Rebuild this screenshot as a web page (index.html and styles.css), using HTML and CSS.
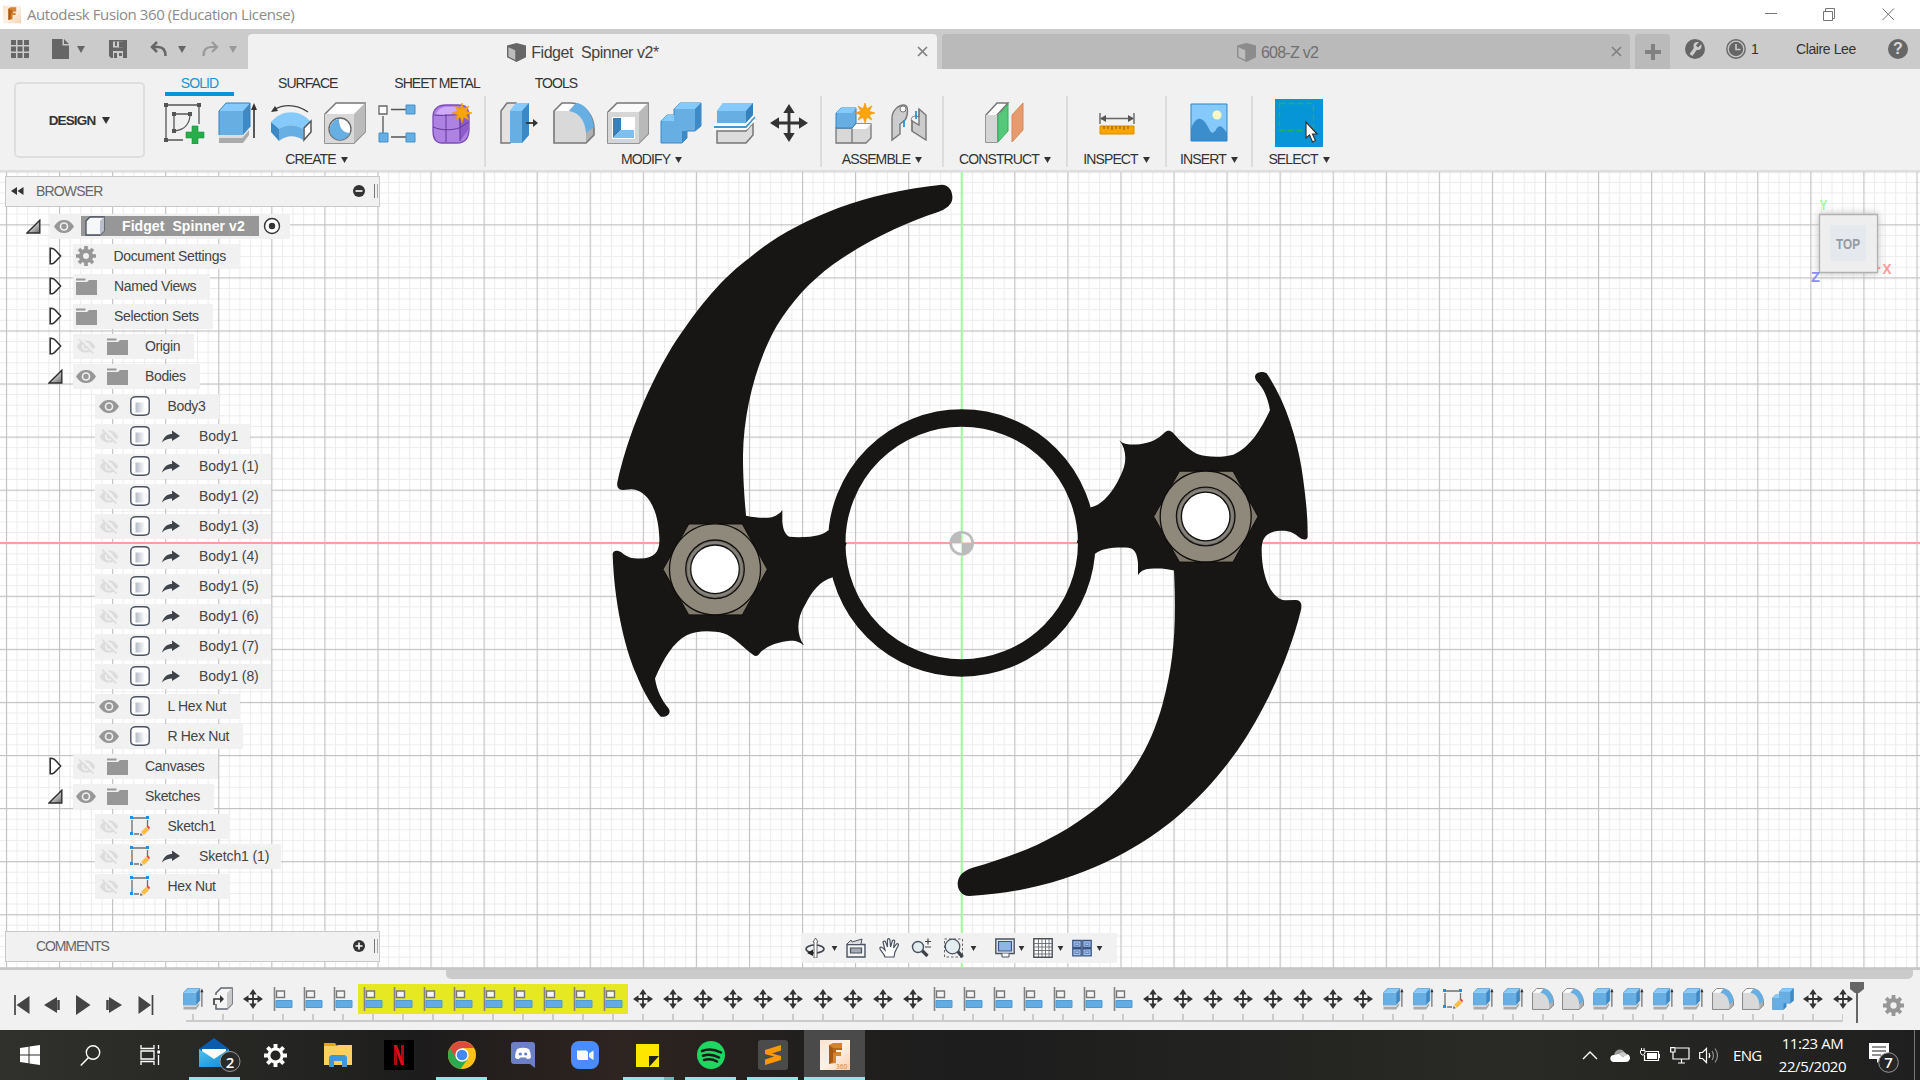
FILE: index.html
```html
<!DOCTYPE html>
<html lang="en">
<head>
<meta charset="utf-8">
<title>Autodesk Fusion 360 (Education License)</title>
<link rel="stylesheet" href="styles.css">
</head>
<body>
<svg class="defs" aria-hidden="true">
  <defs>
    <linearGradient id="g-tri" x1="0" y1="0" x2="1" y2="1"><stop offset="0.2" stop-color="#fff"/><stop offset="1" stop-color="#666"/></linearGradient>
    <linearGradient id="g-cyl" x1="0" x2="1"><stop offset="0" stop-color="#b4bac5"/><stop offset="1" stop-color="#fff"/></linearGradient>
    <linearGradient id="g-orange" x1="0" y1="0" x2="1" y2="1"><stop offset="0" stop-color="#fbe3cf"/><stop offset="0.5" stop-color="#fdf1e6"/><stop offset="1" stop-color="#f8cfae"/></linearGradient>
    <linearGradient id="g-mail" x1="0" y1="0" x2="1" y2="1"><stop offset="0" stop-color="#4cc2f0"/><stop offset="1" stop-color="#1387d6"/></linearGradient>
    <pattern id="p-minor" width="10.614" height="10.614" patternUnits="userSpaceOnUse" x="961.2" y="370.7"><path d="M.5 0V10.614M0 .5H10.614" stroke="#000" stroke-opacity=".075" fill="none"/></pattern>
    <pattern id="p-major" width="53.07" height="53.07" patternUnits="userSpaceOnUse" x="961.2" y="370.7"><path d="M.5 0V53.07M0 .5H53.07" stroke="#000" stroke-opacity=".18" stroke-width="1.3" fill="none"/></pattern>
  </defs>
  <symbol id="down" viewBox="0 0 8 7"><path d="M0 0H8L4 7Z" fill="currentColor"/></symbol>
  <symbol id="star" viewBox="0 0 20 20"><path d="M10 0l1.8 5.8L17 3l-2.8 5.2L20 10l-5.8 1.8L17 17l-5.200-2.800L10 20l-1.800-5.800L3 17l2.800-5.200L0 10l5.800-1.800L3 3l5.200 2.800Z" fill="#f9a602" stroke="#e59400" stroke-width=".6"/></symbol>
  <symbol id="eye" viewBox="0 0 20 14"><path d="M0 7C4 1 7 .5 10 .5S16 1 20 7C16 13 13 13.500 10 13.500S4 13 0 7Z" fill="#979797"/><circle cx="10" cy="7" r="4.300" fill="#f1f1f1"/><circle cx="10" cy="7" r="2.700" fill="#979797"/></symbol>
  <symbol id="eyeoff" viewBox="0 0 20 16"><path d="M0 8C4 2 7 1.500 10 1.500S16 2 20 8C16 14 13 14.500 10 14.500S4 14 0 8Z" fill="#dcdcdc"/><circle cx="10" cy="8" r="4.300" fill="#f1f1f1"/><circle cx="10" cy="8" r="2.600" fill="#dcdcdc"/><path d="M3.500 -.5L19.500 15.500" stroke="#f1f1f1" stroke-width="4"/><path d="M2.500 .5L18 15.500" stroke="#dcdcdc" stroke-width="1.700"/></symbol>
  <symbol id="folder" viewBox="0 0 21 17"><path d="M0 .5H9.500V2.500H0ZM0 4H11L13 2H21V17H0Z" fill="#979797"/></symbol>
  <symbol id="gear" viewBox="0 0 20 20"><path d="M10 0v20M0 10h20M3 3l14 14M17 3L3 17" stroke="currentColor" stroke-width="3.600"/><circle cx="10" cy="10" r="7.200" fill="currentColor"/><circle cx="10" cy="10" r="3" fill="#f1f1f1"/></symbol>
  <symbol id="closed" viewBox="0 0 13 18"><path d="M1.200 1.200C5 1 6 3 11.600 9C6 15 5 17 1.200 16.800Z" fill="#fff" stroke="#2f2f2f" stroke-width="1.600"/></symbol>
  <symbol id="open" viewBox="0 0 15 15"><path d="M1 14L13.800 1.200V14Z" fill="url(#g-tri)" stroke="#2f2f2f" stroke-width="1.400"/></symbol>
  <symbol id="cyl" viewBox="0 0 20 20"><path d="M.8 4.500C.8 2 3 .8 6 .8H14C17 .8 19.200 2 19.200 4.500V15.500C19.200 18 17 19.200 14 19.200H6C3 19.200 .8 18 .8 15.500Z" fill="#fff" stroke="#4b5361" stroke-width="1.400"/><path d="M5.500 6.500H15V16.500H5.500Z" fill="url(#g-cyl)"/></symbol>
  <symbol id="link" viewBox="0 0 18 13"><path d="M0 12.500C2 6 6 4 10 4V.5L18 6L10 11V8.500C6 8.500 3 9.500 0 12.500Z" fill="#3f434a"/></symbol>
  <symbol id="sketch" viewBox="0 0 20 20"><path d="M3 2H16.500M17.500 4V11M2 4V16M4 18H9" stroke="#6f6f6f" stroke-width="1.300" fill="none"/><path d="M0 0H3V3H0ZM16 0H19V3H16ZM0 16H3V19H0Z" fill="#1b90e8"/><path d="M11 16L16 11L19 14L14 19Z" fill="#fbbd43"/><path d="M16.500 10.500L18 9.500L20 11.500L19 13.500Z" fill="#f0403c"/><path d="M10.500 17L13 19.300L10 19.800Z" fill="#666"/></symbol>
  <symbol id="cubew" viewBox="0 0 20 20"><path d="M1 5L5 1H19V15L15 19H1Z" fill="#f6f7f9" stroke="#4b5361" stroke-width="1.300"/><path d="M15 5L19 1V15L15 19Z" fill="#b9bfca"/></symbol>
  <symbol id="cubetab" viewBox="0 0 20 20"><path d="M0 2.500L10 0L20 2.500V15L10 20L0 15Z" fill="currentColor"/><path d="M1.500 4.500L8.700 7.500V18L1.500 14.200Z" fill="#bcbcbc"/></symbol>
  <symbol id="move" viewBox="0 0 40 40"><path d="M20 5V35M5 20H35" stroke="#333" stroke-width="3"/><path d="M20 0L14 9.500H26ZM20 40L14 30.500H26ZM0 20L9.500 14V26ZM40 20L30.500 14V26Z" fill="#333"/></symbol>
  <symbol id="movesm" viewBox="0 0 20 20"><path d="M10 3V17M3 10H17" stroke="#333" stroke-width="1.800"/><path d="M10 0L6.300 5.500H13.700ZM10 20L6.300 14.500H13.700ZM0 10L5.500 6.300V13.700ZM20 10L14.500 6.300V13.700Z" fill="#333"/></symbol>
  <symbol id="extrude" viewBox="0 0 40 42"><path d="M1 35H25V41H1ZM25 35L31 28V33L25 41Z" fill="#aaa"/><path d="M1 31H25V36H1Z" fill="#ddd"/><path d="M1 9V33H25V9Z" fill="#67aee3"/><path d="M1 9L8 1H32L25 9Z" fill="#85cafb"/><path d="M25 9L32 1V25L25 33Z" fill="#3d8ac7"/><path d="M1 33V9L8 1H32V25" fill="none" stroke="#3280bd" stroke-width="1"/><path d="M36 36V5" stroke="#333" stroke-width="1.600"/><path d="M36 1L33 8H39Z" fill="#333"/></symbol>
  <symbol id="import" viewBox="0 0 20 24"><path d="M3 8V6L8 1H19V17L14 22H3V17" fill="#f5f5f5" stroke="#5f6670" stroke-width="1.600"/><path d="M14 6L19 1V17L14 22Z" fill="#c8c8c8"/><path d="M1 18V12H9" fill="none" stroke="#333" stroke-width="1.600"/><path d="M7 8L11 12L7 16Z" fill="#333"/></symbol>
  <symbol id="align" viewBox="0 0 20 24"><path d="M1.500 0V24" stroke="#848484" stroke-width="1.600"/><path d="M3.500 4H11.500V10.500H3.500Z" fill="#f5f5f5" stroke="#777" stroke-width="1.400"/><path d="M3 13.500H19V20.500H3Z" fill="#62ace3" stroke="#4d9ad4"/></symbol>
  <symbol id="fillet" viewBox="0 0 42 42"><path d="M1 41V9L9 1H18C31 1 41 14 41 27V33L33 41Z" fill="#d9d9d9"/><path d="M9 1H22L16 9H1Z" fill="#fff"/><path d="M33 28L41 25V33L33 41Z" fill="#b1b1b1"/><path d="M1 41V9L9 1H18C31 1 41 14 41 27V33L33 41Z" fill="none" stroke="#777" stroke-width="1.600"/><path d="M16 9L23 1C33 2 40 13 41 25L33 31C32 19 27 11 16 9Z" fill="#67aee3"/></symbol>
  <symbol id="combine" viewBox="0 0 42 42"><path d="M1 19L7 13H14V7L20 1H41V24L35 29H27V36L22 41H1Z" fill="#67aee3" stroke="#3b89c6"/><path d="M14 7L20 1H41L35 7ZM1 19L7 13H14V19Z" fill="#85cafb"/><path d="M35 7L41 1V24L35 29ZM22 29H27V36L22 41Z" fill="#3d8ac7"/></symbol>
  <symbol id="fusion" viewBox="0 0 30 30"><path d="M0 0H30V30H0Z" fill="url(#g-orange)"/><path d="M9 5L13 3H22V8H16V12H21V16H16V23L9 24Z" fill="#d9822b"/><path d="M9 5L13 8V22L9 24Z" fill="#a85a14"/><path d="M13 8H22V10H16V13H13Z" fill="#b9651a"/></symbol>
</svg>

<header class="titlebar">
  <svg class="app-icon" viewBox="0 0 30 30"><use href="#fusion"/></svg>
  <span class="app-title">Autodesk Fusion 360 (Education License)</span>
  <svg class="winbtns" viewBox="0 0 130 14"><path d="M0 6.500H12M58.500 4.500H67.500V13.500H58.500ZM60.500 4V1.500H69.500V11.500H68M117.500 1.500L129 13M129 1.500L117.500 13" fill="none" stroke="#777"/></svg>
</header>

<nav class="tabbar">
  <div class="quick">
    <svg class="q-grid" viewBox="0 0 18 18"><path d="M0 0H5V5H0ZM6.500 0H11.500V5H6.500ZM13 0H18V5H13ZM0 6.500H5V11.500H0ZM6.500 6.500H11.500V11.500H6.500ZM13 6.500H18V11.500H13ZM0 13H5V18H0ZM6.500 13H11.500V18H6.500ZM13 13H18V18H13Z" fill="#666"/></svg>
    <svg class="q-file" viewBox="0 0 17 20"><path d="M0 0H10.500V6.500H17V20H0ZM12 0L17 5H12Z" fill="#666"/></svg>
    <svg class="q-down" viewBox="0 0 8 7"><use href="#down"/></svg>
    <svg class="q-save" viewBox="0 0 18 18"><path d="M0 0H18V18H2L0 16Z" fill="#666"/><path d="M4 1.500H14V7.500H4ZM4 11H14V18H4Z" fill="#cbcbcb"/><path d="M6 1.500H8V6H6ZM10 1.500H14V7.500H10ZM5 13H8V18H5ZM10 13H13V16H10Z" fill="#666"/></svg>
    <svg class="q-undo" viewBox="0 0 17 16"><path d="M2 6H8C13 6 15.500 9 15.500 15M7 1L2 6L7 11" fill="none" stroke="#666" stroke-width="2.500"/></svg>
    <svg class="q-down u" viewBox="0 0 8 7"><use href="#down"/></svg>
    <svg class="q-redo" viewBox="0 0 17 16"><path d="M15 6H9C4 6 1.500 9 1.500 15M10 1L15 6L10 11" fill="none" stroke="#999" stroke-width="2.200"/></svg>
    <svg class="q-down r" viewBox="0 0 8 7"><use href="#down"/></svg>
  </div>
  <div class="doctab active"><svg class="cube" viewBox="0 0 20 20"><use href="#cubetab"/></svg><span class="t1">Fidget&nbsp; Spinner v2*</span><svg class="x" viewBox="0 0 11 11"><path d="M1 1L10 10M10 1L1 10" stroke="#808080" stroke-width="1.700"/></svg></div>
  <div class="doctab"><svg class="cube" viewBox="0 0 20 20"><use href="#cubetab"/></svg><span class="t2">608-Z v2</span><svg class="x" viewBox="0 0 11 11"><path d="M1 1L10 10M10 1L1 10" stroke="#808080" stroke-width="1.700"/></svg></div>
  <div class="newtab"><svg viewBox="0 0 16 16"><path d="M8 0V16M0 8H16" stroke="#808080" stroke-width="4"/></svg></div>
  <div class="account">
    <svg class="round" viewBox="0 0 20 20"><circle cx="10" cy="10" r="10" fill="#666"/><path d="M6 16L11 9" stroke="#ccc" stroke-width="3.500"/><circle cx="12.500" cy="7" r="4" fill="#ccc"/><path d="M12 7.500L16.500 2.500" stroke="#666" stroke-width="3"/></svg>
    <svg class="round clock" viewBox="0 0 20 20"><circle cx="10" cy="10" r="9.200" fill="none" stroke="#666" stroke-width="1.400"/><circle cx="10" cy="10" r="7.200" fill="#666"/><path d="M10 5V10.500H14.500" stroke="#ccc" stroke-width="1.600" fill="none"/></svg>
    <span class="one">1</span><span class="user">Claire Lee</span>
    <span class="help">?</span>
  </div>
</nav>

<section class="ribbon">
  <div class="workspace">DESIGN<svg viewBox="0 0 8 7"><use href="#down"/></svg></div>
  <div class="ribbon-main">
    <div class="ribbon-tabs"><span class="on solid">SOLID</span><span class="surface">SURFACE</span><span class="sheet">SHEET METAL</span><span class="tools-tab">TOOLS</span></div>
    <div class="groups">
      <div class="group create"><div class="tools">
        <svg viewBox="0 0 42 42"><path d="M3 3H36M3 3V38M36 3V22M3 38H20M11 12H27C27 21 22 28 11 29Z" fill="none" stroke="#555" stroke-width="1.300"/><path d="M1 1H5V5H1ZM34 1H38V5H34ZM1 36H5V40H1ZM9 10H13V14H9ZM25 10H29V14H25ZM9 27H13V31H9Z" fill="#555"/><path d="M29 24H35V30H41V36H35V42H29V36H23V30H29Z" fill="#28ac4c" stroke="#18953b" stroke-width=".6"/></svg>
        <svg viewBox="-1 0 42 42"><use href="#extrude"/></svg>
        <svg viewBox="0 0 42 42"><path d="M3 8C14 2 26 2 38 10" fill="none" stroke="#444" stroke-width="1.400"/><path d="M1 10L5 4L8 9Z" fill="#333"/><path d="M1 20C12 7 30 7 41 20L33 27C25 22 17 22 9 27Z" fill="#85cafb"/><path d="M1 20L9 27V39L1 30Z" fill="#3a88c4"/><path d="M9 27C17 22 25 22 33 27V38C25 33 17 33 9 39Z" fill="#67aee3"/><path d="M34 26L41 19V30L34 38Z" fill="#fff" stroke="#555" stroke-width="1.500"/></svg>
        <svg viewBox="0 0 42 42"><path d="M1 12L12 1H41V30L30 41H1Z" fill="#fff" stroke="#777" stroke-width="1.500"/><path d="M1 12H30V41H1Z" fill="#d8d8d8"/><path d="M30 12L41 1V30L30 41Z" fill="#bbb"/><circle cx="16" cy="27" r="11" fill="#fff" stroke="#666" stroke-width="1.300"/><path d="M15 17C15 27 20 31 26 31A10.500 10.500 0 1 1 15 17Z" fill="#67aee3"/></svg>
        <svg viewBox="0 0 42 42"><path d="M13 7.500H28M5 14V31M13 35H28" stroke="#555" stroke-width="1.300"/><path d="M1 4H9V12H1Z" fill="#fff" stroke="#666" stroke-width="1.300"/><path d="M28 3H37V12H28ZM1 31H10V40H1ZM28 31H37V40H28Z" fill="#67aee3" stroke="#4390cc"/></svg>
        <svg viewBox="0 0 42 42"><path d="M2 15C2 7 7 3 15 3H27C35 3 38 6 38 15V27C38 36 34 41 26 41H11C4 41 2 35 2 29Z" fill="#ad82e3" stroke="#7d4bb8" stroke-width="1.300"/><path d="M5 12C8 5 14 4 26 5L30 11L13 13Z" fill="#cfa9fa"/><path d="M28 14L37 10V28L29 39Z" fill="#8d5cca"/><path d="M15 12V40M2 25C11 29 22 28 28 26L38 20M29 12V39M3 13C10 14 20 13 37 12" fill="none" stroke="#66389e"/><use href="#star" x="21" y="1" width="20" height="20"/></svg>
      </div><div class="glabel">CREATE<svg viewBox="0 0 8 7"><use href="#down"/></svg></div></div>
      <div class="group modify"><div class="tools">
        <svg viewBox="0 0 42 42"><path d="M2 9L8 1H17V33L11 41H2Z" fill="#e2e2e2" stroke="#777" stroke-width="1.500"/><path d="M11 9L17 1H30V33L23 41H11Z" fill="#67aee3"/><path d="M11 9L17 1H30L23 9Z" fill="#85cafb"/><path d="M23 9L30 1V33L23 41Z" fill="#3a88c4"/><path d="M27 21H35" stroke="#333" stroke-width="1.800"/><path d="M39 21L34 17V25Z" fill="#333"/></svg>
        <svg viewBox="0 0 42 42"><use href="#fillet"/></svg>
        <svg viewBox="0 0 42 42"><path d="M1 10L10 1H41V32L32 41H1Z" fill="#fafafa" stroke="#777" stroke-width="1.600"/><path d="M1 10H32V41H1Z" fill="#d6d6d6"/><path d="M32 10L41 1V32L32 41Z" fill="#b9b9b9"/><path d="M5 15H28V37H5Z" fill="#fff"/><path d="M6 16H14V28L6 36Z" fill="#3482bd"/><path d="M14 28H27V36H6Z" fill="#7bc0f2"/></svg>
        <svg viewBox="0 0 42 42"><use href="#combine"/></svg>
        <svg viewBox="0 0 42 42"><path d="M3 9L9 1H39V13L32 21H3Z" fill="#67aee3"/><path d="M3 9L9 1H39L32 9Z" fill="#85cafb"/><path d="M32 9L39 1V13L32 21Z" fill="#3482bd"/><path d="M3 29H32L39 21V33L32 41H3Z" fill="#dcdcdc" stroke="#777" stroke-width="1.500"/><path d="M0 25H32L41 15" fill="none" stroke="#fff" stroke-width="5"/><path d="M0 25H32L41 15" fill="none" stroke="#3a9ce0" stroke-width="1.800"/></svg>
        <svg viewBox="-1 0 42 42"><use href="#move" x="1" y="2" width="38" height="38"/></svg>
      </div><div class="glabel">MODIFY<svg viewBox="0 0 8 7"><use href="#down"/></svg></div></div>
      <div class="group assemble"><div class="tools">
        <svg viewBox="0 0 42 42"><path d="M2 26H18V41H2ZM18 26L22 22H37V36L32 41H18Z" fill="#d8d8d8" stroke="#777" stroke-width="1.300"/><path d="M18 27L22 22H37L32 27Z" fill="#fff"/><path d="M2 11L7 6H22V21L18 26H2Z" fill="#67aee3" stroke="#3482bd"/><path d="M2 11L7 6H22L18 11Z" fill="#85cafb"/><use href="#star" x="21" y="1" width="20" height="20"/></svg>
        <svg viewBox="0 0 42 42"><path d="M4 16C4 9 10 3 16 3C21 3 20 14 17 18L12 22V32L4 38Z" fill="#ccc" stroke="#777" stroke-width="1.400"/><circle cx="15" cy="7" r="3" fill="#fff" stroke="#777"/><path d="M31 7L38 13V38L24 29V19L31 23Z" fill="#ccc" stroke="#777" stroke-width="1.400"/><path d="M24 20C22 17 24 12 31 15V7M24 29V18" fill="none" stroke="#777"/><path d="M16 18V25M28 9V17" stroke="#1990dc" stroke-width="1.700"/></svg>
      </div><div class="glabel">ASSEMBLE<svg viewBox="0 0 8 7"><use href="#down"/></svg></div></div>
      <div class="group construct"><div class="tools">
        <svg viewBox="0 0 42 42"><path d="M2 13L13 1H24L13 13V40H2Z" fill="#fff" stroke="#777" stroke-width="1.500"/><path d="M2 13H13V40H2Z" fill="#d5d5d5"/><path d="M14 14L24 2V29L14 40Z" fill="#55c879" stroke="#36ad5c"/><path d="M28 13L39 1V28L28 40Z" fill="#e69b6e" stroke="#d58858"/></svg>
      </div><div class="glabel">CONSTRUCT<svg viewBox="0 0 8 7"><use href="#down"/></svg></div></div>
      <div class="group inspect"><div class="tools">
        <svg viewBox="0 0 42 42"><path d="M4 11V22M38 11V22M5 16.500H37" stroke="#666" stroke-width="1.400"/><path d="M4 16.500L10 13V20ZM38 16.500L32 13V20Z" fill="#555"/><path d="M4 24H38V32H4Z" fill="#f9a602" stroke="#de8c00"/><path d="M8 24V27M12 24V27M16 24V28M20 24V27M24 24V27M28 24V28M32 24V27" stroke="#8a5800"/></svg>
      </div><div class="glabel">INSPECT<svg viewBox="0 0 8 7"><use href="#down"/></svg></div></div>
      <div class="group insert"><div class="tools">
        <svg viewBox="0 0 42 42"><path d="M3 2H39V39H3Z" fill="#85cafb"/><circle cx="29" cy="13" r="4.500" fill="#fdf8c8"/><path d="M3 27C8 13 15 14 21 27C24 33 26 31 29 26C33 22 35 26 39 31V39H3Z" fill="#3b8dcb"/><path d="M3 2H39V39H3Z" fill="none" stroke="#2c85c5"/></svg>
      </div><div class="glabel">INSERT<svg viewBox="0 0 8 7"><use href="#down"/></svg></div></div>
      <div class="group select"><div class="tools">
        <svg class="sel" viewBox="0 0 48 48"><path d="M0 0H48V48H0Z" fill="#0696d7"/><path d="M4.500 4.500H38.500V31.500H4.500Z" fill="none" stroke="#27ae60" stroke-width="1.300" stroke-dasharray="6 3"/><path d="M31 23V39L34.500 36L37.500 43L40.500 41.500L37.500 35H42Z" fill="#fff" stroke="#333" stroke-width="1.200"/></svg>
      </div><div class="glabel">SELECT<svg viewBox="0 0 8 7"><use href="#down"/></svg></div></div>
    </div>
  </div>
</section>

<main class="viewport">
  <svg class="canvas" viewBox="0 0 1920 796">
    <path d="M0 0H1920V796H0Z" fill="url(#p-minor)"/>
    <path d="M0 0H1920V796H0Z" fill="url(#p-major)"/>
    <path d="M0 371H1920" stroke="#ffa0a0" stroke-width="2"/>
    <path d="M961.700 0V796" stroke="#9aff9a" stroke-width="2"/>
    <g transform="translate(0 -172)">
      <circle cx="961.700" cy="543" r="125" fill="none" stroke="#171614" stroke-width="17.500"/>
      <g transform="translate(590 170) scale(.33333 .35714)" fill="#171614">
        <path d="M1055 41C1077 41 1089 60 1087 80C1086 97 1068 111 1040 119C956 145 842 190 730 264C660 312 605 368 560 437C500 535 461 670 459 800C459 870 464 920 468 968C500 974 525 975 545 972C560 968 570 962 577 952V985C579 1005 584 1020 598 1027C620 1029 640 1028 660 1027C685 1024 702 1020 715 1009L770 1045L728 1140C690 1150 665 1180 645 1218C620 1255 618 1300 642 1331C630 1323 620 1317 600 1318C560 1322 525 1333 505 1358C500 1362 495 1362 490 1358C465 1342 432 1306 400 1297C370 1290 320 1288 290 1303C250 1322 220 1370 195 1424C201 1458 215 1485 236 1508C245 1520 232 1533 213 1531C205 1526 165 1475 140 1415C100 1330 72 1200 68 1075C70 1063 85 1065 95 1071C112 1085 125 1088 150 1088C195 1086 210 1068 208 1030C205 950 173 897 125 894L98 896C83 895 79 885 83 870C108 767 160 630 245 497C330 375 400 300 480 245C600 150 800 65 1055 41Z"/>
      </g>
      <g transform="translate(940 360) scale(.33333 .35077)" fill="#171614">
        <path d="M980 38C1035 115 1070 220 1085 310C1095 375 1104 440 1103 505C1100 516 1085 512 1075 504C1060 490 1040 486 1020 487C975 490 966 510 965 540C965 620 995 682 1035 685L1068 684C1085 685 1087 700 1082 716C1060 800 1020 900 970 990C905 1110 820 1215 702 1310C560 1420 350 1515 88 1528C65 1528 53 1510 53 1493C53 1472 70 1455 100 1447C230 1411 350 1370 480 1270C570 1200 632 1105 668 980C702 860 710 760 702 600C680 594 650 593 630 595C612 596 602 602 594 613V580C592 555 585 537 565 535C520 533 482 538 466 552L410 520L452 420C490 414 530 365 552 305C560 280 556 250 538 229C550 240 565 243 600 240C630 237 655 226 674 207C681 200 690 200 698 207C720 230 745 257 772 268C800 278 850 278 880 270C930 248 962 200 990 143C983 105 970 80 950 60C940 47 945 33 970 34Z"/>
      </g>
      <g id="nut" transform="translate(715 569.300)">
        <path d="M-26.200 -45.300H27.300L52.300 0L27.300 45.600H-26.200L-52 0Z" fill="#807a6d" stroke="#0f0e0c"/>
        <circle r="45.500" fill="#8f897b" stroke="#0f0e0c" stroke-width="1.300"/>
        <circle r="29.300" fill="#77736a" stroke="#111" stroke-width="1.300"/>
        <circle r="26.500" fill="none" stroke="#8a8780" stroke-width="1.500"/>
        <circle r="24.300" fill="#fff" stroke="#111" stroke-width="1.300"/>
      </g>
      <use href="#nut" x="490.700" y="-52.800"/>
      <g transform="translate(961.700 543.200)"><circle r="11" fill="#fff" fill-opacity=".75" stroke="#bbb" stroke-width="2.600"/><path d="M0 0V-11A11 11 0 0 0 -11 0ZM0 0V11A11 11 0 0 0 11 0Z" fill="#bbb"/><path d="M0 -10V0" stroke="#96ff96" stroke-width="1.500"/><path d="M0 0H10" stroke="#ff9c9c"/></g>
      <g class="viewcube">
        <path d="M1819.500 214.500H1877.500V272.500H1819.500Z" fill="#f1f1f1" fill-opacity=".94" stroke="#b0b0b0" stroke-width="1.300"/>
        <path d="M1830 225H1866V261H1830Z" fill="#e5e8ec"/>
        <text x="1836" y="248.500" class="vc-top" textLength="24" lengthAdjust="spacingAndGlyphs">TOP</text>
        <text x="1819.500" y="209.500" class="ax y" textLength="8" lengthAdjust="spacingAndGlyphs">Y</text>
        <text x="1882.500" y="273.500" class="ax xx" textLength="9" lengthAdjust="spacingAndGlyphs">X</text>
        <text x="1811" y="281.500" class="ax z" textLength="9" lengthAdjust="spacingAndGlyphs">Z</text>
        <circle cx="1879" cy="268" r="1.300" fill="#fd8f8f"/>
      </g>
    </g>
  </svg>

  <aside class="browser">
    <div class="panel"><svg class="rew" viewBox="0 0 13 8"><path d="M6 0V8L0 4ZM12.500 0V8L6.500 4Z" fill="#333"/></svg><span class="p-name b">BROWSER</span><svg class="pm" viewBox="0 0 12 12"><circle cx="6" cy="6" r="6" fill="#333"/><path d="M2.500 6H9.500" stroke="#fff" stroke-width="1.600"/></svg><i class="grip"></i></div>
    <div class="tree">
      <div class="row l0"><svg class="op" viewBox="0 0 15 15"><use href="#open"/></svg><div class="pill root"><svg class="eye" viewBox="0 0 20 14"><use href="#eye"/></svg><span class="rootname"><svg class="ic" viewBox="0 0 20 20"><use href="#cubew"/></svg><b>Fidget&nbsp; Spinner v2</b></span><svg class="radio" viewBox="0 0 18 18"><circle cx="9" cy="9" r="7.500" fill="#fff" stroke="#333" stroke-width="1.400"/><circle cx="9" cy="9" r="3.200" fill="#333"/></svg></div></div>
      <div class="row l1"><svg class="cl" viewBox="0 0 13 18"><use href="#closed"/></svg><div class="pill"><svg class="ic gear" viewBox="0 0 20 20"><use href="#gear"/></svg><span>Document Settings</span></div></div>
      <div class="row l1"><svg class="cl" viewBox="0 0 13 18"><use href="#closed"/></svg><div class="pill"><svg class="fo" viewBox="0 0 21 17"><use href="#folder"/></svg><span>Named Views</span></div></div>
      <div class="row l1"><svg class="cl" viewBox="0 0 13 18"><use href="#closed"/></svg><div class="pill"><svg class="fo" viewBox="0 0 21 17"><use href="#folder"/></svg><span>Selection Sets</span></div></div>
      <div class="row l1"><svg class="cl" viewBox="0 0 13 18"><use href="#closed"/></svg><div class="pill"><svg class="eye" viewBox="0 0 20 16"><use href="#eyeoff"/></svg><svg class="fo" viewBox="0 0 21 17"><use href="#folder"/></svg><span>Origin</span></div></div>
      <div class="row l1"><svg class="op" viewBox="0 0 15 15"><use href="#open"/></svg><div class="pill"><svg class="eye" viewBox="0 0 20 14"><use href="#eye"/></svg><svg class="fo" viewBox="0 0 21 17"><use href="#folder"/></svg><span>Bodies</span></div></div>
      <div class="row l2"><div class="pill"><svg class="eye" viewBox="0 0 20 14"><use href="#eye"/></svg><svg class="ic" viewBox="0 0 20 20"><use href="#cyl"/></svg><span>Body3</span></div></div>
      <div class="row l2"><div class="pill"><svg class="eye" viewBox="0 0 20 16"><use href="#eyeoff"/></svg><svg class="ic" viewBox="0 0 20 20"><use href="#cyl"/></svg><svg class="ln" viewBox="0 0 18 13"><use href="#link"/></svg><span>Body1</span></div></div>
      <div class="row l2"><div class="pill"><svg class="eye" viewBox="0 0 20 16"><use href="#eyeoff"/></svg><svg class="ic" viewBox="0 0 20 20"><use href="#cyl"/></svg><svg class="ln" viewBox="0 0 18 13"><use href="#link"/></svg><span>Body1 (1)</span></div></div>
      <div class="row l2"><div class="pill"><svg class="eye" viewBox="0 0 20 16"><use href="#eyeoff"/></svg><svg class="ic" viewBox="0 0 20 20"><use href="#cyl"/></svg><svg class="ln" viewBox="0 0 18 13"><use href="#link"/></svg><span>Body1 (2)</span></div></div>
      <div class="row l2"><div class="pill"><svg class="eye" viewBox="0 0 20 16"><use href="#eyeoff"/></svg><svg class="ic" viewBox="0 0 20 20"><use href="#cyl"/></svg><svg class="ln" viewBox="0 0 18 13"><use href="#link"/></svg><span>Body1 (3)</span></div></div>
      <div class="row l2"><div class="pill"><svg class="eye" viewBox="0 0 20 16"><use href="#eyeoff"/></svg><svg class="ic" viewBox="0 0 20 20"><use href="#cyl"/></svg><svg class="ln" viewBox="0 0 18 13"><use href="#link"/></svg><span>Body1 (4)</span></div></div>
      <div class="row l2"><div class="pill"><svg class="eye" viewBox="0 0 20 16"><use href="#eyeoff"/></svg><svg class="ic" viewBox="0 0 20 20"><use href="#cyl"/></svg><svg class="ln" viewBox="0 0 18 13"><use href="#link"/></svg><span>Body1 (5)</span></div></div>
      <div class="row l2"><div class="pill"><svg class="eye" viewBox="0 0 20 16"><use href="#eyeoff"/></svg><svg class="ic" viewBox="0 0 20 20"><use href="#cyl"/></svg><svg class="ln" viewBox="0 0 18 13"><use href="#link"/></svg><span>Body1 (6)</span></div></div>
      <div class="row l2"><div class="pill"><svg class="eye" viewBox="0 0 20 16"><use href="#eyeoff"/></svg><svg class="ic" viewBox="0 0 20 20"><use href="#cyl"/></svg><svg class="ln" viewBox="0 0 18 13"><use href="#link"/></svg><span>Body1 (7)</span></div></div>
      <div class="row l2"><div class="pill"><svg class="eye" viewBox="0 0 20 16"><use href="#eyeoff"/></svg><svg class="ic" viewBox="0 0 20 20"><use href="#cyl"/></svg><svg class="ln" viewBox="0 0 18 13"><use href="#link"/></svg><span>Body1 (8)</span></div></div>
      <div class="row l2"><div class="pill"><svg class="eye" viewBox="0 0 20 14"><use href="#eye"/></svg><svg class="ic" viewBox="0 0 20 20"><use href="#cyl"/></svg><span>L Hex Nut</span></div></div>
      <div class="row l2"><div class="pill"><svg class="eye" viewBox="0 0 20 14"><use href="#eye"/></svg><svg class="ic" viewBox="0 0 20 20"><use href="#cyl"/></svg><span>R Hex Nut</span></div></div>
      <div class="row l1"><svg class="cl" viewBox="0 0 13 18"><use href="#closed"/></svg><div class="pill"><svg class="eye" viewBox="0 0 20 16"><use href="#eyeoff"/></svg><svg class="fo" viewBox="0 0 21 17"><use href="#folder"/></svg><span>Canvases</span></div></div>
      <div class="row l1"><svg class="op" viewBox="0 0 15 15"><use href="#open"/></svg><div class="pill"><svg class="eye" viewBox="0 0 20 14"><use href="#eye"/></svg><svg class="fo" viewBox="0 0 21 17"><use href="#folder"/></svg><span>Sketches</span></div></div>
      <div class="row l2"><div class="pill"><svg class="eye" viewBox="0 0 20 16"><use href="#eyeoff"/></svg><svg class="ic" viewBox="0 0 20 20"><use href="#sketch"/></svg><span>Sketch1</span></div></div>
      <div class="row l2"><div class="pill"><svg class="eye" viewBox="0 0 20 16"><use href="#eyeoff"/></svg><svg class="ic" viewBox="0 0 20 20"><use href="#sketch"/></svg><svg class="ln" viewBox="0 0 18 13"><use href="#link"/></svg><span>Sketch1 (1)</span></div></div>
      <div class="row l2"><div class="pill"><svg class="eye" viewBox="0 0 20 16"><use href="#eyeoff"/></svg><svg class="ic" viewBox="0 0 20 20"><use href="#sketch"/></svg><span>Hex Nut</span></div></div>
    </div>
    <div class="panel comments"><span class="p-name c">COMMENTS</span><svg class="pm" viewBox="0 0 12 12"><circle cx="6" cy="6" r="6" fill="#333"/><path d="M2.500 6H9.500M6 2.500V9.500" stroke="#fff" stroke-width="1.600"/></svg><i class="grip"></i></div>
  </aside>

  <div class="navbar">
    <svg class="nv a" viewBox="0 0 20 20"><ellipse cx="10" cy="11" rx="9" ry="4" fill="none" stroke="#3d434d" stroke-width="1.700"/><path d="M9 20V4H8L10.500 0L13 4H12V20Z" fill="#fff" stroke="#555" stroke-width=".9"/><path d="M2 15L8 11.500V18Z" fill="#222"/></svg><svg class="nd a2" viewBox="0 0 8 6"><use href="#down" width="8" height="6"/></svg>
    <svg class="nv b2" viewBox="0 0 20 20"><path d="M1 6.500H19V19H1Z" fill="#f4f4f4" stroke="#4b5361" stroke-width="1.400"/><path d="M4.500 10H15.500V15H4.500Z" fill="#a6abb5" stroke="#4b5361" stroke-width="1.200"/><path d="M1 6L5 2L6 4L16 1L15 6" fill="#ddd" stroke="#4b5361"/></svg>
    <svg class="nv c2" viewBox="0 0 20 20"><path d="M6 19C5 15 1 13 .8 10C2 8 4 10 6 12L4 4C5 2.500 6.500 3 7 5L8.500 9L8.500 1.500C9.500 0 11 1 11 2.500L11.500 9L13.500 2.500C15 1.500 16 2.500 15.500 4L14.500 10L17.500 6C19 5 20 6.500 19 8L16 14L15 19Z" fill="#fff" stroke="#4b5361" stroke-width="1.200"/></svg>
    <svg class="nv d" viewBox="0 0 20 20"><path d="M10 12L16 18" stroke="#3c4048" stroke-width="3.200"/><circle cx="6.500" cy="9" r="5.500" fill="#e1edef" stroke="#4b5361" stroke-width="1.400"/><path d="M13.500 3.500H19.500M16.500 .5V6.500M13.500 9H19.500" stroke="#444" stroke-width="1.200"/></svg>
    <svg class="nv e" viewBox="0 0 20 20"><path d="M1 1H19V19H1Z" fill="none" stroke="#666" stroke-dasharray="2.500 2"/><path d="M14 13L19 19" stroke="#3c4048" stroke-width="3.400"/><circle cx="9" cy="8.500" r="7.300" fill="#e1edef" stroke="#4b5361" stroke-width="1.300"/></svg><svg class="nd e2" viewBox="0 0 8 6"><use href="#down" width="8" height="6"/></svg>
    <svg class="nv f" viewBox="0 0 20 20"><path d="M.8 1H19.200V15.500H.8Z" fill="#e8e8e8" stroke="#4b5361" stroke-width="1.400"/><path d="M3.500 3.500H16.500V13H3.500Z" fill="#8fb5e5" stroke="#34588c" stroke-width="1.200"/><path d="M7 15.500V19H14V15.500" fill="#fff" stroke="#4b5361"/></svg><svg class="nd f2" viewBox="0 0 8 6"><use href="#down" width="8" height="6"/></svg>
    <svg class="nv g" viewBox="0 0 20 20"><path d="M.8 .8H19.200V19.200H.8Z" fill="#fff" stroke="#4b4f58" stroke-width="1.400"/><path d="M5.500 1V19M9 1V19M12.500 1V19M16 1V19M1 5.500H19M1 9H19M1 12.500H19M1 16H19" stroke="#666b75" stroke-width=".9"/></svg><svg class="nd g2" viewBox="0 0 8 6"><use href="#down" width="8" height="6"/></svg>
    <svg class="nv h" viewBox="0 0 20 20"><path d="M.8 2.500H9.200V9.500H.8ZM10.800 2.500H19.200V9.500H10.800ZM.8 10.800H9.200V17.800H.8ZM10.800 10.800H19.200V17.800H10.800Z" fill="#a8c1e6" stroke="#3a5584" stroke-width="1.300"/><path d="M3 5H7V7.500H3ZM13 5H17V7.500H13ZM3 13H7V15.500H3ZM13 13H17V15.500H13Z" fill="none" stroke="#5a86c5"/></svg><svg class="nd h2" viewBox="0 0 8 6"><use href="#down" width="8" height="6"/></svg>
  </div>
</main>

<section class="timeline">
  <div class="scroll"><i></i></div>
  <div class="tl-body">
    <svg class="play" viewBox="0 0 140 20"><path d="M1 0V20M138.500 0V20" stroke="#444" stroke-width="1.700"/><path d="M15.500 1V19L2.500 10ZM43 2V18L30 10ZM62 0L76.500 10L62 20ZM95 2V18L108 10ZM124.500 1V19L137 10Z" fill="#444"/><path d="M44.500 5V15M93.500 5V15" stroke="#444" stroke-width="2.500"/></svg>
    <div class="track">
      <div class="features">
        <svg class="ex"><use href="#extrude"/></svg><svg class="al"><use href="#import"/></svg><svg class="mv"><use href="#movesm"/></svg>
        <svg class="al"><use href="#align"/></svg><svg class="al"><use href="#align"/></svg><svg class="al"><use href="#align"/></svg>
        <svg class="al hi"><use href="#align"/></svg><svg class="al hi"><use href="#align"/></svg><svg class="al hi"><use href="#align"/></svg><svg class="al hi"><use href="#align"/></svg><svg class="al hi"><use href="#align"/></svg><svg class="al hi"><use href="#align"/></svg><svg class="al hi"><use href="#align"/></svg><svg class="al hi"><use href="#align"/></svg><svg class="al hi"><use href="#align"/></svg>
        <svg class="mv"><use href="#movesm"/></svg><svg class="mv"><use href="#movesm"/></svg><svg class="mv"><use href="#movesm"/></svg><svg class="mv"><use href="#movesm"/></svg><svg class="mv"><use href="#movesm"/></svg><svg class="mv"><use href="#movesm"/></svg><svg class="mv"><use href="#movesm"/></svg><svg class="mv"><use href="#movesm"/></svg><svg class="mv"><use href="#movesm"/></svg><svg class="mv"><use href="#movesm"/></svg>
        <svg class="al"><use href="#align"/></svg><svg class="al"><use href="#align"/></svg><svg class="al"><use href="#align"/></svg><svg class="al"><use href="#align"/></svg><svg class="al"><use href="#align"/></svg><svg class="al"><use href="#align"/></svg><svg class="al"><use href="#align"/></svg>
        <svg class="mv"><use href="#movesm"/></svg><svg class="mv"><use href="#movesm"/></svg><svg class="mv"><use href="#movesm"/></svg><svg class="mv"><use href="#movesm"/></svg><svg class="mv"><use href="#movesm"/></svg><svg class="mv"><use href="#movesm"/></svg><svg class="mv"><use href="#movesm"/></svg><svg class="mv"><use href="#movesm"/></svg>
        <svg class="ex"><use href="#extrude"/></svg><svg class="ex"><use href="#extrude"/></svg><svg class="al"><use href="#sketch"/></svg><svg class="ex"><use href="#extrude"/></svg><svg class="ex"><use href="#extrude"/></svg>
        <svg class="fl"><use href="#fillet"/></svg><svg class="fl"><use href="#fillet"/></svg>
        <svg class="ex"><use href="#extrude"/></svg><svg class="ex"><use href="#extrude"/></svg><svg class="ex"><use href="#extrude"/></svg><svg class="ex"><use href="#extrude"/></svg>
        <svg class="fl"><use href="#fillet"/></svg><svg class="fl"><use href="#fillet"/></svg><svg class="fl"><use href="#combine"/></svg><svg class="mv"><use href="#movesm"/></svg><svg class="mv"><use href="#movesm"/></svg>
      </div>
      <div class="rail"></div>
    </div>
    <svg class="marker" viewBox="0 0 14 41"><path d="M0 0H14V7L9 11H5L0 7Z" fill="#666"/><path d="M7 8V41" stroke="#666" stroke-width="2"/></svg>
    <svg class="tl-gear" viewBox="0 0 20 20"><use href="#gear"/></svg>
  </div>
</section>

<footer class="taskbar">
  <div class="apps">
    <div class="app w60"><svg width="20" height="20" viewBox="0 0 20 20"><path d="M0 3L8.500 1.700V9.500H0ZM9.500 1.500L20 0V9.500H9.500ZM0 10.500H8.500V18.300L0 17ZM9.500 10.500H20V20L9.500 18.500Z" fill="#fff"/></svg></div>
    <div class="app w60"><svg width="21" height="21" viewBox="0 0 21 21"><circle cx="13" cy="7.500" r="6.700" fill="none" stroke="#fff" stroke-width="1.400"/><path d="M8.500 12.500L.8 20.500" stroke="#fff" stroke-width="1.500"/></svg></div>
    <div class="app w60"><svg width="20" height="20" viewBox="0 0 20 20"><path d="M1 0V3.500H14V0M1 20V16.500H14V20M1 6H14V14H1ZM18.500 0V4M18.500 10V20" fill="none" stroke="#fff" stroke-width="1.300"/><path d="M17.300 5.500H20V8.500H17.300Z" fill="#fff"/></svg></div>
    <div class="app mail on"><svg width="42" height="36" viewBox="0 0 42 36"><path d="M0 12L15 1L30 12V30H0Z" fill="#0b5cad"/><path d="M3 12H27V22H3Z" fill="#fff"/><path d="M0 12L15 22L30 12V30H0Z" fill="url(#g-mail)"/><circle cx="31" cy="24.500" r="10" fill="#2a2a2a" stroke="#999"/><text x="26.700" y="30.500" class="bd">2</text></svg></div>
    <div class="app set"><svg width="23" height="23" viewBox="0 0 20 20"><path d="M10 0V4M10 16V20M0 10H4M16 10H20M3 3L6 6M14 14L17 17M17 3L14 6M6 14L3 17" stroke="#fff" stroke-width="3.400"/><circle cx="10" cy="10" r="5.700" fill="none" stroke="#fff" stroke-width="2.600"/></svg></div>
    <div class="app exp"><svg width="28" height="24" viewBox="0 0 28 24"><path d="M0 0H11L13 3H0Z" fill="#e8a317"/><path d="M0 3H12L14 2H28V22H0Z" fill="#fbd05f"/><path d="M5 24V14L7 12H21L23 14V24H18V18H10V24Z" fill="#3c97dd"/></svg></div>
    <div class="app net"><svg width="30" height="30" viewBox="0 0 30 30"><path d="M0 0H30V30H0Z" fill="#000"/><path d="M10 5H13V25H10ZM17 5H20V25H17Z" fill="#b20710"/><path d="M10 5H13L20 25H17Z" fill="#e50914"/></svg></div>
    <div class="app chr on"><svg width="28" height="28" viewBox="0 0 28 28"><circle cx="14" cy="14" r="14" fill="#fbc116"/><path d="M14 14L1.900 7A14 14 0 0 0 12.500 27.900L20 17.500Z" fill="#2da94f"/><path d="M14 14L7.900 17.500L1.900 7A14 14 0 0 1 26.100 7H14Z" fill="#dd4b3e"/><circle cx="14" cy="14" r="6.700" fill="#fff"/><circle cx="14" cy="14" r="5.300" fill="#4587f3"/></svg></div>
    <div class="app dis"><svg width="24" height="26" viewBox="0 0 24 26"><path d="M3 0H21Q24 0 24 3V26L19 22H3Q0 22 0 19V3Q0 0 3 0Z" fill="#6c7fc9"/><path d="M6 7Q12 4.500 18 7Q20 11 20 15.500Q18 17.500 16 17L15 15.500H9L8 17Q6 17.500 4 15.500Q4 11 6 7Z" fill="#fff"/><circle cx="9.300" cy="12" r="1.600" fill="#6c7fc9"/><circle cx="14.700" cy="12" r="1.600" fill="#6c7fc9"/></svg></div>
    <div class="app zoom"><svg width="28" height="28" viewBox="0 0 28 28"><rect width="28" height="28" rx="8" fill="#4a8cff"/><path d="M6 9.500H15Q17 9.500 17 12V19H8Q6 19 6 17ZM18 12.500L22.500 9.500V19L18 16Z" fill="#fff"/></svg></div>
    <div class="app note on"><svg width="23" height="23" viewBox="0 0 23 23"><path d="M0 0H23V23H0Z" fill="#ffe600"/><path d="M13 12H23L13 23Z" fill="#1f1f1f"/></svg></div>
    <div class="app spo on"><svg width="28" height="28" viewBox="0 0 28 28"><circle cx="14" cy="14" r="14" fill="#1ed760"/><path d="M5 10Q14 6.500 24 11.500M6 14.700Q14 12 22 16.500M7 19Q14 17 20 20.500" fill="none" stroke="#1a1a1a" stroke-width="2.500" stroke-linecap="round"/></svg></div>
    <div class="app sub on"><svg width="30" height="30" viewBox="0 0 30 30"><rect width="30" height="30" rx="3" fill="#4b4b4b"/><path d="M7 10L23 5V10.500L14 13.500L23 16V20L7 25V19.500L16 16.500L7 14Z" fill="#ff9800"/></svg></div>
    <div class="app fus on"><svg width="30" height="30" viewBox="0 0 30 30"><use href="#fusion"/><text x="16" y="28.500" class="f360">360</text></svg></div>
  </div>
  <div class="tray">
    <svg class="t-up" viewBox="0 0 16 9"><path d="M1 8L8 1L15 8" fill="none" stroke="#fff" stroke-width="1.400"/></svg>
    <svg class="t-cloud" viewBox="0 0 20 13"><path d="M4 6C5 0 12 -2 15 4L8 9Z" fill="#999"/><path d="M4 13C-1 13 -1 6 4 6L9 5L13 8C17 3 20 6 20 9.500Q19 13 16 13Z" fill="#fff"/><path d="M9 5C12 2 16 3 17 6L13 8Z" fill="#ccc"/></svg>
    <svg class="t-bat" viewBox="0 0 20 14"><path d="M5.500 3.500H18.500V12.500H4.500V7M19.500 6V10" fill="none" stroke="#fff" stroke-width="1.200"/><path d="M7 5H17V11H7Z" fill="#fff"/><path d="M.5 2.500H5V5L3.500 7H2L.5 5ZM1.500 0V2M4 0V2" fill="none" stroke="#fff"/></svg>
    <svg class="t-net" viewBox="0 0 20 17"><path d="M6 1H19V12H3V7M8 16H15M11.500 12V16M.7 .7H5V5H.7ZM3 5V8" fill="none" stroke="#fff" stroke-width="1.200"/></svg>
    <svg class="t-snd" viewBox="0 0 20 17"><path d="M.7 5.500H3.500L7.500 1.500V15.500L3.500 11.500H.7Z" fill="none" stroke="#fff" stroke-width="1.200"/><path d="M10 6Q11.500 8.500 10 11" fill="none" stroke="#fff" stroke-width="1.200"/><path d="M13 4Q16 8.500 13 13M16 1.500Q21 8.500 16 15.500" fill="none" stroke="#999" stroke-width="1.100"/></svg>
    <span class="eng">ENG</span>
    <span class="clockbox"><span class="time">11:23 AM</span><span class="date">22/5/2020</span></span>
    <svg class="t-note" viewBox="0 0 32 32"><path d="M0 1H20V17H12L8 21V17H0Z" fill="#fff"/><path d="M3 5H17M3 9H17M3 13H12" stroke="#222"/><circle cx="19.500" cy="20.500" r="9.800" fill="#262626" stroke="#999"/><text x="15.300" y="26" class="bd">7</text></svg>
    <i class="peek"></i>
  </div>
</footer>
</body>
</html>
```
FILE: styles.css
```css
* { box-sizing: border-box; }
body {
  margin: 0; width: 1920px; height: 1080px; overflow: hidden;
  display: flex; flex-direction: column;
  font: 14px "Liberation Sans", Arial, sans-serif; color: #333; background: #f1f1f1;
}
svg { display: block; flex: none; }
span { white-space: nowrap; }
.defs { position: absolute; width: 0; height: 0; }

/* window title */
.titlebar { flex: none; height: 29px; background: #fff; display: flex; align-items: center; padding: 0 25px 1px 3px; }
.app-icon { width: 18px; height: 19px; margin-right: 6px; }
.app-title { font: 15px "Open Sans", "Noto Sans", sans-serif; color: #8b8b8b; letter-spacing: -.42px; flex: 1; }
.winbtns { width: 130px; height: 14px; }

/* quick access and document tabs */
.tabbar { flex: none; height: 40px; background: #cbcbcb; display: flex; }
.quick { width: 248px; display: flex; align-items: center; padding: 0 0 0 11px; color: #666; }
.q-grid { width: 18px; height: 18px; }
.q-file { width: 17px; height: 20px; margin-left: 23px; }
.q-down { width: 8px; height: 7px; margin-left: 8px; }
.q-save { width: 18px; height: 18px; margin-left: 24px; }
.q-undo { width: 17px; height: 16px; margin-left: 23px; }
.q-down.u { margin-left: 11px; }
.q-redo { width: 17px; height: 16px; margin-left: 16px; }
.q-down.r { margin-left: 10px; color: #999; }
.doctab {
  width: 688px; margin-top: 5px; background: #bababa; border-radius: 4px 4px 0 0;
  display: flex; align-items: center; justify-content: center; position: relative; font-size: 16px; color: #707070;
  padding: 2px 17px 0 0;
}
.doctab.active { width: 689px; background: #f1f1f1; color: #444; margin-right: 5px; padding-right: 19px; }
.doctab .cube { width: 19px; height: 19px; margin-right: 5px; color: #8c8c8c; }
.doctab.active .cube { color: #666; }
.t1 { letter-spacing: -.45px; }
.t2 { letter-spacing: -.75px; }
.doctab .x { position: absolute; right: 8px; top: 12px; width: 11px; height: 11px; }
.active .x { right: 9px; }
.newtab { width: 35px; margin: 5px 0 0 5px; background: #bababa; border-radius: 4px 4px 0 0; display: flex; align-items: center; justify-content: center; }
.newtab svg { width: 16px; height: 16px; }
.account { flex: 1; display: flex; align-items: center; padding-left: 15px; }
.round { width: 20px; height: 20px; }
.clock { margin-left: 21px; }
.one { margin-left: 5px; width: 45px; }
.user { width: 92px; letter-spacing: -.4px; }
.help { width: 20px; height: 20px; border-radius: 50%; background: #666; color: #d8d8d8; font: bold 16px/20px "Liberation Sans", Arial, sans-serif; text-align: center; }

/* ribbon */
.ribbon { flex: none; height: 103px; display: flex; background: #f1f1f1; border-bottom: 2px solid #dedede; }
.workspace { width: 131px; height: 76px; margin: 13px 7px 0 14px; border: 2px solid #dedede; border-radius: 5px; display: flex; align-items: center; justify-content: center; gap: 7px; font-weight: bold; font-size: 13.500px; letter-spacing: -.85px; }
.workspace svg { width: 8px; height: 7px; }
.ribbon-main { display: flex; flex-direction: column; }
.ribbon-tabs { height: 27px; display: flex; padding-left: 13px; }
.ribbon-tabs span { height: 27px; line-height: 29px; text-align: center; letter-spacing: -.95px; }
.ribbon-tabs .solid { width: 69px; color: #1496d4; border-bottom: 4px solid #0696d7; }
.ribbon-tabs .surface { width: 58px; margin-left: 44px; }
.ribbon-tabs .sheet { width: 86px; margin-left: 58px; }
.ribbon-tabs .tools-tab { width: 46px; margin-left: 53px; }
.groups { display: flex; }
.group { height: 71px; display: flex; flex-direction: column; align-items: center; border-right: 2px solid #dcdcdc; }
.group:last-child { border-right: 0; }
.create { width: 334px; }
.modify { width: 336px; }
.assemble { width: 122px; }
.construct { width: 124px; }
.inspect { width: 99px; }
.insert { width: 86px; }
.select { width: 92px; }
.tools { display: flex; align-items: center; gap: 11.700px; height: 54px; }
.modify .tools { padding-left: 3px; }
.tools svg { width: 42px; height: 42px; }
.tools .sel { width: 48px; height: 48px; }
.glabel { height: 17px; line-height: 17px; padding-top: 2px; display: flex; align-items: center; gap: 5px; letter-spacing: -.87px; }
.glabel svg { width: 7px; height: 6px; }
.create .glabel, .modify .glabel { margin-right: 3px; }

/* model view */
.viewport { flex: none; height: 796px; position: relative; background: #fff; overflow: hidden; }
.canvas { width: 1920px; height: 796px; }
.viewcube path:first-child { filter: drop-shadow(0 0 4px #bbb); }
.vc-top { font: bold 14px "Liberation Sans", Arial, sans-serif; fill: #959aa1; }
.ax { font: bold 14px "Liberation Sans", Arial, sans-serif; }
.ax.y { fill: #a4f9a4; }
.ax.xx { fill: #fd9b9b; }
.ax.z { fill: #8c8cf9; }
.browser { position: absolute; left: 5px; top: 4px; width: 375px; height: 786px; display: flex; flex-direction: column; }
.panel { flex: none; height: 31px; background: #f1f1f1; border: 1px solid #c9c9c9; display: flex; align-items: center; padding: 0 0 1px 5px; color: #666; }
.rew { width: 13px; height: 8px; margin-right: 12px; }
.p-name { width: 317px; }
.p-name.b { letter-spacing: -.85px; }
.p-name.c { letter-spacing: -1.100px; padding-left: 25px; width: 342px; }
.pm { width: 12px; height: 12px; }
.grip { width: 4px; height: 14px; margin-left: 9px; border-left: 1px solid #777; border-right: 1px solid #aaa; }
.comments { margin-top: auto; }
.tree { padding-top: 6.500px; display: flex; flex-direction: column; gap: 5px; color: #444; }
.row { display: flex; align-items: center; height: 25px; }
.l0 { padding-left: 21px; }
.l1 { padding-left: 43px; }
.l2 { padding-left: 90px; }
.op { width: 15px; height: 15px; }
.cl { width: 13px; height: 18px; margin: 0 1px; }
.l0 .pill { margin-left: 9px; }
.l1 .pill { margin-left: 10px; }
.pill { height: 25px; background: #f1f1f1; display: flex; align-items: center; padding: 0 14px 0 3px; letter-spacing: -.35px; }
.l2 .pill { padding-left: 4px; }
.pill > span { margin-left: 17.500px; line-height: 25px; }
.eye { width: 20px; height: 15px; margin-right: 11px; }
.ic { width: 20px; height: 20px; }
.fo { width: 21px; height: 17px; }
.fo + span { margin-left: 17px; }
.gear { color: #979797; }
.ln { width: 18px; height: 13px; margin-left: 12px; }
.ln + span { margin: 0 -2px 0 19px; letter-spacing: -.12px; }
.pill.root { width: 240px; padding: 0 0 0 4px; }
.root .eye { margin-right: 7px; }
.root .rootname { width: 178px; height: 20px; margin-left: 0; background: #979797; color: #fff; display: flex; align-items: center; padding-left: 4px; letter-spacing: .08px; }
.rootname b { margin-left: 17px; }
.radio { width: 18px; height: 18px; margin-left: 4px; }
.navbar { position: absolute; left: 801px; top: 761px; width: 316px; height: 30px; background: #f1f1f1; display: flex; align-items: center; padding-left: 4px; color: #333; }
.nv { width: 20px; height: 20px; }
.nd { width: 7px; height: 5px; }
.a2 { margin-left: 6px; }
.b2 { margin-left: 8px; }
.c2 { margin-left: 13px; }
.nv.d { width: 21px; margin-left: 12px; }
.nv.e { margin-left: 11px; width: 21px; }
.e2 { margin-left: 6px; }
.nv.f { margin-left: 18px; }
.f2 { margin-left: 3px; }
.nv.g { margin-left: 8px; }
.g2 { margin-left: 4px; }
.nv.h { margin-left: 8px; }
.h2 { margin-left: 4px; }

/* timeline */
.timeline { flex: none; height: 62px; background: #f1f1f1; }
.scroll { height: 11px; border-top: 2px solid #c6c6c6; padding: 0 7px 0 446px; }
.scroll i { display: block; height: 9px; background: #cbcbcb; border-radius: 0 0 5px 5px; }
.tl-body { display: flex; height: 51px; }
.play { width: 140px; height: 20px; margin: 16px 0 0 14px; }
.track { width: 1680px; margin-left: 17px; }
.features { display: flex; padding: 5px 0 0 6.500px; height: 36px; }
.features svg { width: 30px; height: 30px; }
.features .al { padding: 3px 5px; }
.features .ex { padding: 3px 4px 3px 5px; }
.features .mv { padding: 5px; }
.features .fl { padding: 3px 4px; }
.features .hi { background: #e6e822; }
.rail { height: 8px; margin-left: 15px; width: 1657px; border-bottom: 2px solid #cbcbcb; margin-top: -1px; background: repeating-linear-gradient(90deg, transparent 0 6px, #cbcbcb 6px 8px, transparent 8px 30px); }
.marker { width: 14px; height: 41px; margin: 3px 0 0 -1px; }
.tl-gear { width: 21px; height: 21px; margin: 16px 0 0 19px; color: #979797; }

/* taskbar */
.taskbar { flex: none; height: 50px; display: flex; justify-content: space-between; color: #fff; background: linear-gradient(90deg, #30302c 0, #242422 300px, #1d1c1c 420px, #2e2420 620px, #211f1e 800px, #1d1d1d 1000px, #292925 1500px, #1f1f1f 1920px); }
.apps { display: flex; }
.app { height: 50px; display: flex; align-items: center; justify-content: center; border-bottom: 3px solid transparent; padding-top: 3px; }
.app.on { border-color: #8ee6e8; }
.w60 { width: 60px; }
.mail { width: 51px; margin-left: 9px; padding-left: 10px; }
.set { width: 63px; margin-left: 4px; margin-right: -4px; }
.exp { width: 70px; }
.net { width: 60px; margin-left: -4px; }
.chr { width: 51px; margin-left: 7px; }
.dis { width: 72px; }
.zoom { width: 52px; }
.app.note { width: 51px; margin-left: 12px; padding-right: 2px; border-image: linear-gradient(90deg, #8ee6e8 41px, #6fb6b8 41px) 0 0 3 0; }
.spo { width: 51px; margin-left: 11px; }
.sub { width: 51px; margin-left: 11px; }
.fus { width: 61px; margin-left: 6px; background: #4a4a4a; }
.bd { font: 600 15px "Open Sans", "Noto Sans", sans-serif; fill: #fff; }
.f360 { font: 6.500px "Open Sans", sans-serif; fill: #d9822b; }
.tray { display: flex; align-items: center; font: 15px "Open Sans", "Noto Sans", sans-serif; }
.t-up { width: 16px; height: 9px; margin-right: 12px; }
.t-cloud { width: 20px; height: 13px; margin-right: 10px; }
.t-bat { width: 20px; height: 14px; margin-right: 10px; }
.t-net { width: 20px; height: 17px; margin-right: 9px; }
.t-snd { width: 20px; height: 17px; margin-right: 14px; }
.eng { width: 45px; letter-spacing: -.7px; }
.clockbox { width: 69px; display: flex; flex-direction: column; align-items: center; line-height: 23px; letter-spacing: -.45px; margin-right: 22px; }
.date { letter-spacing: -.4px; }
.t-note { width: 32px; height: 32px; margin-top: 5px; }
.peek { width: 1px; height: 50px; background: #777; margin: 0 5px 0 13px; }
```
